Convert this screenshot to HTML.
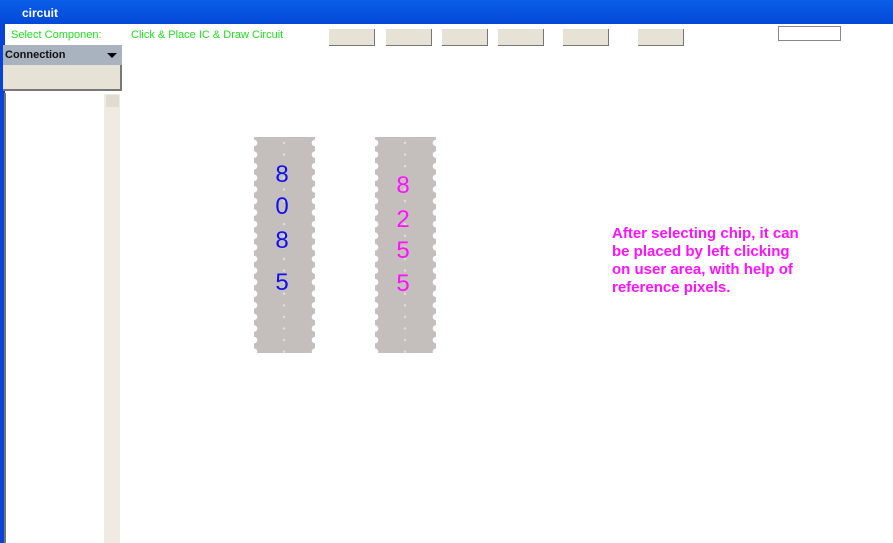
<!DOCTYPE html>
<html><head><style>
*{margin:0;padding:0;box-sizing:border-box}
body{width:893px;height:543px;overflow:hidden;background:#fff;font-family:"Liberation Sans",sans-serif;position:relative}
.a{position:absolute}
.btn{position:absolute;top:29px;width:46px;height:17px;background:#e6e2d6;border-right:1px solid #777;border-bottom:1px solid #777}
.chip{position:absolute;top:137px;width:61px;height:216px;background-color:#c4bfbd;
background-image:radial-gradient(circle at 0 6px,#fff 3px,transparent 3.5px),radial-gradient(circle at 61px 6px,#fff 3px,transparent 3.5px),radial-gradient(circle at 30px 6px,#ddd 1px,transparent 1.5px);
background-size:61px 11.6px;background-repeat:repeat-y}
.d{position:absolute;font-size:24px;width:56px;text-align:center}
</style></head><body>
<div class="a" style="left:0;top:0;width:893px;height:24px;background:linear-gradient(#0a5ee8,#0448d8)"></div>
<div class="a" style="left:22px;top:6px;color:#fff;font-size:12px;font-weight:bold">circuit</div>
<div class="a" style="left:0;top:24px;width:5px;height:519px;background:#0842d8"></div>
<div class="a" style="left:11px;top:29px;color:#1ee01e;font-size:11px">Select Componen:</div>
<div class="a" style="left:131px;top:29px;color:#1ee01e;font-size:11px">Click &amp; Place IC &amp; Draw Circuit</div>
<div class="btn" style="left:329px"></div>
<div class="btn" style="left:386px"></div>
<div class="btn" style="left:442px"></div>
<div class="btn" style="left:498px"></div>
<div class="btn" style="left:563px"></div>
<div class="btn" style="left:638px"></div>
<div class="a" style="left:778px;top:26px;width:63px;height:15px;border:1px solid #888;background:#fff"></div>
<div class="a" style="left:3px;top:45px;width:119px;height:20px;background:#a9b3c0"></div>
<div class="a" style="left:5px;top:49px;font-size:11px;font-weight:bold;color:#111">Connection</div>
<div class="a" style="left:107px;top:53px;width:0;height:0;border-left:5px solid transparent;border-right:5px solid transparent;border-top:5px solid #000"></div>
<div class="a" style="left:3px;top:65px;width:119px;height:26px;background:#e6e2d6;border-bottom:2px solid #777;border-right:2px solid #777"></div>
<div class="a" style="left:4px;top:93px;width:117px;height:450px;border-left:2px solid #777;background:#fff"></div>
<div class="a" style="left:104px;top:94px;width:16px;height:449px;background:#efebe3"></div>
<div class="a" style="left:106px;top:95px;width:13px;height:12px;background:#e0dcd0"></div>
<div class="chip" style="left:254px"><div class="d" style="top:24px;color:#1010ee">8</div><div class="d" style="top:56px;color:#1010ee">0</div><div class="d" style="top:90px;color:#1010ee">8</div><div class="d" style="top:132px;color:#1010ee">5</div></div>
<div class="chip" style="left:375px"><div class="d" style="top:35px;color:#ff10ff">8</div><div class="d" style="top:69px;color:#ff10ff">2</div><div class="d" style="top:100px;color:#ff10ff">5</div><div class="d" style="top:133px;color:#ff10ff">5</div></div>
<div class="a" style="left:612px;top:225px;color:#ff10ff;font-size:15px;font-weight:bold;line-height:18px;width:240px">After selecting chip, it can<br>be placed by left clicking<br>on user area, with help of<br>reference pixels.</div>
</body></html>
